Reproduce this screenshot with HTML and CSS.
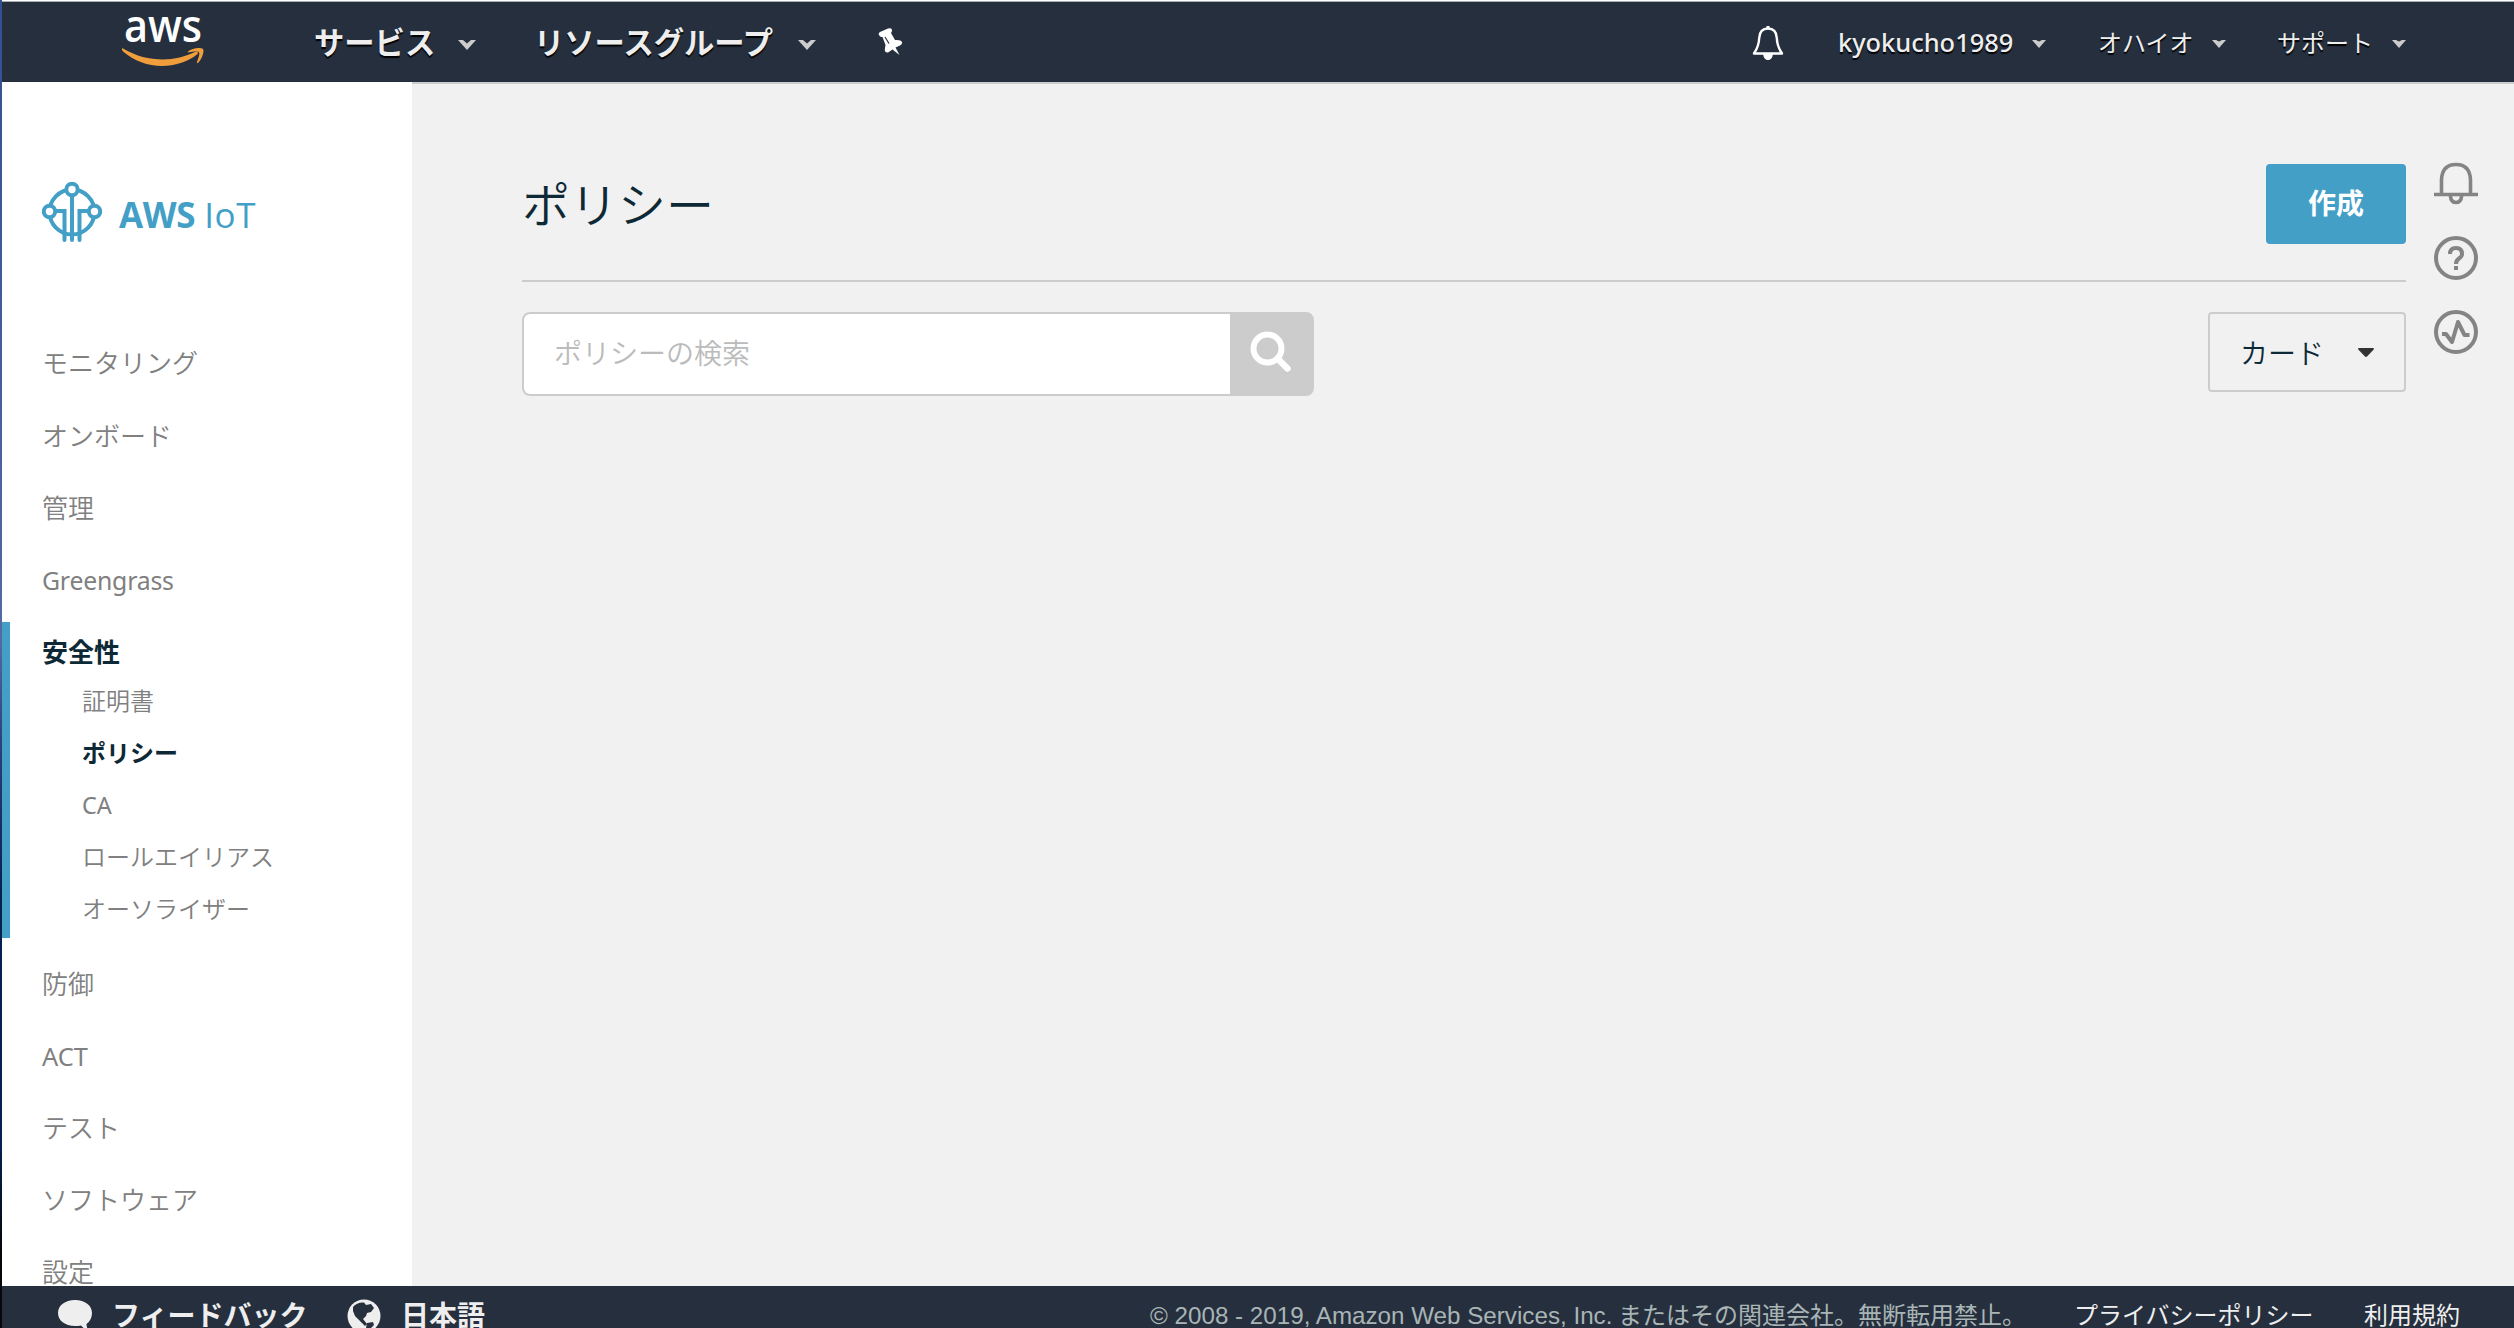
FILE: index.html
```html
<!DOCTYPE html>
<html lang="ja">
<head>
<meta charset="utf-8">
<title>AWS IoT</title>
<link rel="stylesheet" href="styles.css">
</head>
<body>
<div class="window">
  <header class="topnav">
    <svg class="aws-logo" width="84" height="66" viewBox="0 -6 84 66">
      <text x="3" y="34" textLength="78" lengthAdjust="spacingAndGlyphs">aws</text>
      <path fill="#f09d3c" d="M1 40.500Q.500 42 2 43.500C13 53 27 58 41 58C54 58 66 54 76 46.500C78 45 76.500 43 74 44C65 48.500 53 51.500 42 51.500C28 51.500 15 48 3 41Q1.500 40 1 40.500Z"/>
      <path fill="#f09d3c" d="M67 43.500C71 40 79 39 82 41C83.500 43 81.500 50 77.500 54.500C76.500 55.500 75.500 55 76 54C77.500 50 79 45.500 78 44.200C77 43 72 43.500 68 44.200C66.500 44.500 66.500 44 67 43.500Z"/>
    </svg>
    <a class="menu menu-services">サービス</a>
    <svg class="chev chev-big" width="18" height="10" viewBox="0 0 18 10"><path d="M0 0H5L9 3.500L13 0H18L9 10Z"/></svg>
    <a class="menu menu-groups">リソースグループ</a>
    <svg class="chev chev-big" width="18" height="10" viewBox="0 0 18 10"><path d="M0 0H5L9 3.500L13 0H18L9 10Z"/></svg>
    <svg class="pin" width="26" height="28" viewBox="0 0 26 28"><path fill="#fff" d="M1 7Q0 5.500 2 4L10 .500Q14 -.500 14 2Q14 4 13 5L17 12Q23 11.500 24 14Q24.500 16 22 17.500L17.500 19.500L21.500 27L14.500 21.500L10 24.500Q6 25 7 20L7.500 17L4.500 9Q2 9.500 1 7Z"/><path d="M7 9L11 15.500" stroke="#252f3e" stroke-width="1.200"/></svg>
    <svg class="nav-bell" width="32" height="36" viewBox="0 0 32 36"><path fill="none" stroke="#fff" stroke-width="2.400" stroke-linejoin="round" d="M16 3.500C10 3.500 7.500 7.500 7.200 13C7 20 5 24 2 28.500H30C27 24 25 20 24.800 13C24.500 7.500 22 3.500 16 3.500Z"/><path fill="#fff" d="M14.500 1H17.500V4H14.500ZM11 29H21Q20 35 16 35T11 29Z"/></svg>
    <a class="sub-menu user">kyokucho1989</a>
    <svg class="chev" width="14" height="8" viewBox="0 0 14 8"><path d="M0 0H4L7 1.500L10 0H14L7 8Z"/></svg>
    <a class="sub-menu region">オハイオ</a>
    <svg class="chev" width="14" height="8" viewBox="0 0 14 8"><path d="M0 0H4L7 1.500L10 0H14L7 8Z"/></svg>
    <a class="sub-menu support">サポート</a>
    <svg class="chev" width="14" height="8" viewBox="0 0 14 8"><path d="M0 0H4L7 1.500L10 0H14L7 8Z"/></svg>
  </header>

  <div class="body">
    <aside class="sidebar">
      <div class="brand">
        <svg width="60" height="60" viewBox="0 0 60 60" fill="none" stroke="#439fc6" stroke-width="4">
          <circle cx="30" cy="30" r="22.500"/>
          <path stroke-linecap="round" d="M30 14V58M14 29H22.500V58M46 29H37.500V58"/>
          <circle cx="30" cy="7.500" r="5.700" fill="#fff"/><circle cx="7.500" cy="29.500" r="5.700" fill="#fff"/><circle cx="52.500" cy="29.500" r="5.700" fill="#fff"/>
        </svg>
        <span class="brand-name"><b>AWS</b> <span class="iot">IoT</span></span>
      </div>
      <ul class="nav">
        <li>モニタリング</li><li>オンボード</li><li>管理</li><li class="latin-item">Greengrass</li>
      </ul>
      <div class="group">
        <div class="group-title">安全性</div>
        <ul class="subnav"><li>証明書</li><li class="on">ポリシー</li><li class="ca">CA</li><li>ロールエイリアス</li><li>オーソライザー</li></ul>
      </div>
      <ul class="nav nav-after">
        <li>防御</li><li class="act">ACT</li><li>テスト</li><li>ソフトウェア</li><li>設定</li>
      </ul>
    </aside>
    <main class="main">
      <div class="content">
        <div class="head"><h1>ポリシー</h1><button class="create">作成</button></div>
        <div class="tools">
          <div class="search">
            <div class="field">ポリシーの検索</div>
            <div class="go"><svg width="42" height="42" viewBox="0 0 42 42" fill="none" stroke="#fff"><circle cx="17.500" cy="17.500" r="14" stroke-width="6"/><path d="M28.500 28.500L37.500 37.500" stroke-width="6.500" stroke-linecap="round"/></svg></div>
          </div>
          <div class="select"><span>カード</span><svg width="16" height="9" viewBox="0 0 16 9"><path fill="#333" d="M1 0H15Q16.500 .500 15.500 1.800L9 8.500Q8 9.300 7 8.500L.500 1.800Q-.500 .500 1 0Z"/></svg></div>
        </div>
      </div>
      <div class="rail">
        <svg width="44" height="44" viewBox="0 0 44 44" fill="none" stroke="#848484" stroke-width="3.600"><path d="M7.500 33V18Q8 2.500 22 2.500T36.500 18V33"/><path d="M0 32.500H44"/><path d="M16.500 33V34.500Q17 40.500 22 40.500T27.500 34.500V33"/></svg>
        <svg width="44" height="44" viewBox="0 0 44 44" fill="none" stroke="#848484" stroke-width="4"><circle cx="22" cy="22" r="20"/><path d="M16 18Q16 12 22 12T28 18Q28 20.500 25 22.500Q22 24.500 22 28M22 30V34"/></svg>
        <svg width="44" height="44" viewBox="0 0 44 44" fill="none" stroke="#848484" stroke-width="4"><circle cx="22" cy="22" r="20"/><path stroke-linejoin="round" d="M8 24H12L18 32L24 12L30.500 25H35.500"/></svg>
      </div>
    </main>
  </div>

  <footer class="footer">
    <svg class="bubble" width="34" height="32" viewBox="0 0 34 32"><path fill="#eee" d="M17 0C7 0 0 5.500 0 13S7 26 17 26Q20 26 23 25.500Q26 29 31 31Q28.500 28 28.500 24Q34 20 34 13C34 5.500 27 0 17 0Z"/></svg>
    <a class="foot-strong feedback">フィードバック</a>
    <svg class="globe" width="34" height="34" viewBox="0 0 34 34"><circle cx="17" cy="17" r="16.500" fill="#eee"/><path fill="#252f3e" d="M6 8Q10 3 17 3.500L19 6L24 5L27 9L24 13L20 14L19 17L16 20L20 25L18 27L12 21L8 17L6 12Z M20 24L26 23L27 26L22 31L19 29Z"/></svg>
    <a class="foot-strong language">日本語</a>
    <span class="copyright"><span class="latin">© 2008 - 2019, Amazon Web Services, Inc.</span><span>またはその関連会社。無断転用禁止。</span></span>
    <a class="legal privacy">プライバシーポリシー</a>
    <a class="legal">利用規約</a>
  </footer>
</div>
</body>
</html>
```
FILE: styles.css
```css
* { box-sizing: border-box; }
body {
  margin: 0;
  height: 1328px;
  overflow: hidden;
  padding-left: 2px;
  background: linear-gradient(#33508f 0, #3d5a99 260px, #5569a5 640px, #2b427c 740px, #04204d 900px, #04204d 1150px, #05070c 1250px);
  font-family: "Noto Sans", "Noto Sans CJK JP", sans-serif;
}
.window { display: flex; flex-direction: column; height: 1328px; border-top: 1px solid #fff; background: #f1f1f1; }
ul { list-style: none; margin: 0; padding: 0; }

.topnav {
  display: flex;
  align-items: center;
  flex: none;
  height: 81px;
  border-top: 1px solid #a9b0b5;
  background: #252f3e;
  color: #eee;
  padding: 0 108px 0 119px;
}
.topnav > * { flex: none; }
.aws-logo { align-self: flex-start; }
.aws-logo text { font-family: "Open Sans", sans-serif; font-size: 45px; font-weight: 600; fill: #fff; }
.menu, .sub-menu { white-space: nowrap; text-shadow: 0 2px 1px #000; }
.menu { font-size: 30.300px; font-weight: 700; line-height: 40px; padding-top: 2px; }
.menu-services { width: 144px; margin-left: 109px; }
.menu-groups { width: 264px; margin-left: 58px; }
.chev { fill: #ccc; margin-top: 4px; }
.chev-big { margin-top: 6px; }
.pin { margin-left: 62px; }
.nav-bell { margin: 2px 55px 0 auto; }
.sub-menu { font-size: 24px; line-height: 40px; padding-top: 1px; }
.user { width: 194px; margin-left: -1px; font-size: 25.400px; font-weight: 500; padding-top: 0; }
.region { width: 114px; margin-left: 52px; }
.support { width: 115px; margin-left: 51px; }

.body { display: flex; flex: 1; min-height: 0; overflow: hidden; }
.sidebar { flex: none; width: 410px; background: #fff; color: #808080; }
.brand { display: flex; height: 160px; padding: 100px 0 0 40px; color: #439fc6; }
.brand-name { margin-left: 17px; font: 35px/48px "Open Sans", sans-serif; padding-top: 9px; white-space: nowrap; }
.brand-name b { display: inline-block; letter-spacing: -.400px; }
.iot { letter-spacing: .600px; }
.nav { padding: 85px 0 0 40px; font-size: 26px; font-weight: 350; }
.nav li { height: 72.500px; line-height: 72.500px; }
.nav .latin-item { font-size: 24.800px; font-weight: 400; letter-spacing: -.200px; line-height: 71px; }
.nav .act { font-size: 25.400px; font-weight: 400; }
.nav-after { padding-top: 10px; }
.nav-after li { height: 72px; line-height: 72px; }
.group { height: 316px; margin-top: 5px; border-left: 8px solid #439fc6; padding-left: 32px; }
.group-title { height: 53px; line-height: 60px; font-size: 26px; font-weight: 700; color: #0e2936; }
.subnav { padding-left: 40px; font-size: 24px; font-weight: 350; }
.subnav li { height: 52px; line-height: 51px; }
.subnav .on { color: #0e2936; font-weight: 700; }
.subnav .ca { font-size: 23.500px; font-weight: 400; line-height: 52px; }

.main { display: flex; flex: 1; border-top: 2px solid #ccc; padding-left: 110px; }
.content { width: 1884px; }
.head { display: flex; justify-content: space-between; height: 198px; border-bottom: 2px solid #ccc; padding-top: 80px; }
h1 { margin: 0; font-size: 48px; line-height: 82px; font-weight: 350; color: #0e2936; }
.create { width: 140px; height: 80px; border: 0; border-radius: 4px; background: #439fc6; color: #fff; font: 700 28px/74px "Noto Sans CJK JP", sans-serif; padding: 0 0 4px; }
.tools { display: flex; justify-content: space-between; padding-top: 30px; }
.search { display: flex; width: 792px; height: 84px; border: 2px solid #ccc; border-radius: 8px; background: #ccc; }
.field { flex: 1; border-radius: 6px 0 0 6px; background: #fff; padding-left: 30px; font-size: 28px; font-weight: 350; line-height: 78px; color: #bbb; }
.go { width: 82px; padding: 17px 0 0 20px; }
.select { display: flex; justify-content: space-between; align-items: center; width: 198px; height: 80px; border: 2px solid #ccc; border-radius: 4px; padding: 0 30px; font-size: 28px; font-weight: 350; color: #0e2936; }
.rail { display: flex; flex-direction: column; gap: 30px; margin: 78px 0 0 28px; }

.footer { display: flex; flex: none; height: 42px; padding: 8px 0 0 56px; overflow: hidden; background: #252f3e; color: #eee; white-space: nowrap; line-height: 42px; }
.footer > * { flex: none; }
.bubble { margin-top: 6px; }
.globe { margin: 5px 0 0 0; }
.foot-strong { font-size: 28px; font-weight: 700; }
.feedback { width: 235px; margin-left: 20px; }
.language { margin-left: 20px; width: 749px; }
.copyright { width: 924px; color: #a9b5b5; font-size: 24px; }
.copyright .latin { display: inline-block; width: 468px; font-family: "Liberation Sans", sans-serif; font-size: 24.200px; }
.legal { font-size: 24px; }
.privacy { width: 290px; }
```
